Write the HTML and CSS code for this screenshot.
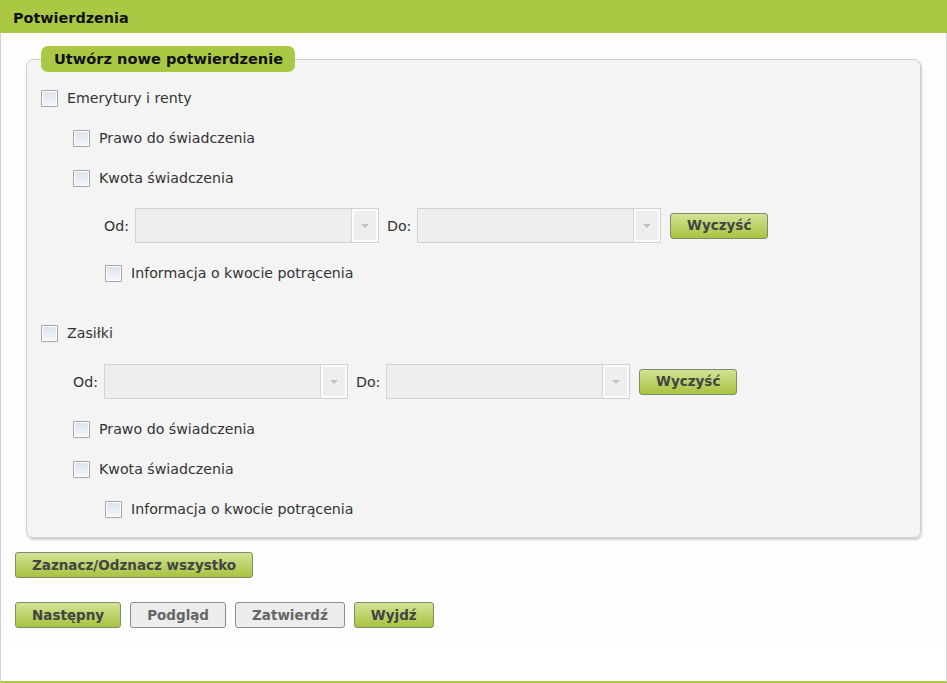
FILE: index.html
```html
<!DOCTYPE HTML>
<html>
<head>
	<meta charset="utf-8" />
	<title>Potwierdzenia</title>
	<link rel="stylesheet" href="styles.css">
</head>
<body>
	<div class="panel">
		<div class="panel-head">Potwierdzenia</div>
		<div class="panel-body">
			<fieldset class="box">
				<legend>Utwórz nowe potwierdzenie</legend>

				<label class="row first"><input type="checkbox" /> Emerytury i renty</label>
				<label class="row lvl1"><input type="checkbox" /> Prawo do świadczenia</label>
				<label class="row lvl1"><input type="checkbox" /> Kwota świadczenia</label>
				<div class="range lvl2">
					<span class="range-label">Od:</span>
					<div class="select"><div class="select-value"></div><div class="select-arrow"></div></div>
					<span class="range-label to">Do:</span>
					<div class="select"><div class="select-value"></div><div class="select-arrow"></div></div>
					<button class="btn small">Wyczyść</button>
				</div>
				<label class="row lvl2 after-range"><input type="checkbox" /> Informacja o kwocie potrącenia</label>

				<label class="row group"><input type="checkbox" /> Zasiłki</label>
				<div class="range lvl1 tight">
					<span class="range-label">Od:</span>
					<div class="select"><div class="select-value"></div><div class="select-arrow"></div></div>
					<span class="range-label to">Do:</span>
					<div class="select"><div class="select-value"></div><div class="select-arrow"></div></div>
					<button class="btn small">Wyczyść</button>
				</div>
				<label class="row lvl1 after-range"><input type="checkbox" /> Prawo do świadczenia</label>
				<label class="row lvl1"><input type="checkbox" /> Kwota świadczenia</label>
				<label class="row lvl2"><input type="checkbox" /> Informacja o kwocie potrącenia</label>
			</fieldset>

			<div class="actions">
				<button class="btn">Zaznacz/Odznacz wszystko</button>
			</div>
			<div class="actions nav">
				<button class="btn">Następny</button>
				<button class="btn off">Podgląd</button>
				<button class="btn off">Zatwierdź</button>
				<button class="btn">Wyjdź</button>
			</div>
		</div>
		<div class="panel-foot"></div>
	</div>
</body>
</html>
```

FILE: styles.css
```css
body {
	font-family: 'DejaVu Sans', Verdana, sans-serif;
	font-size: 14.2px;
	color: #333;
	margin: 0;
	padding: 0;
	background: #fff;
}

.panel {
	border-left: 1px solid #d4d4d4;
	border-right: 1px solid #d4d4d4;
	border-bottom: 2px solid #a9c744;
	height: 681px;
	display: flex;
	flex-direction: column;
}

.panel-head {
	background: #abc845;
	color: #111;
	font-weight: bold;
	font-size: 14.4px;
	height: 33px;
	line-height: 36px;
	padding-left: 13px;
	margin-left: -1px;
	margin-right: -1px;
}

.panel-body {
	background: #fdfdfd;
	padding: 13px 14px 13px 14px;
}

.panel-foot {
	flex: 1;
	background: #fff;
}

.box {
	background: #f4f4f4;
	border: 1px solid #cfcfcf;
	border-radius: 7px;
	box-shadow: 1px 2px 2px rgba(0, 0, 0, .18);
	margin: 0 11px;
	padding: 0 14px 8px 14px;
}

.box legend {
	background: #abc845;
	border-radius: 7px;
	color: #111;
	font-weight: bold;
	font-size: 14.6px;
	line-height: 26px;
	height: 26px;
	padding: 0 12px 0 13px;
}

.row {
	display: flex;
	align-items: center;
	height: 40px;
	white-space: nowrap;
}

.row input {
	-webkit-appearance: none;
	appearance: none;
	width: 17px;
	height: 17px;
	margin: 0 9px 0 0;
	border: 1px solid #a4a4a4;
	border-radius: 1px;
	box-shadow: inset 0 0 0 1px #fff;
	background: linear-gradient(#dae2ec, #f5f7fa);
	box-sizing: border-box;
	flex: none;
}

.first { margin-top: 6px; }
.group { margin-top: 20px; }
.after-range { margin-top: 10px; }

.lvl1 { padding-left: 32px; }
.lvl2 { padding-left: 64px; }

.range {
	display: flex;
	align-items: center;
	height: 35px;
	margin-top: 10px;
}
.range.lvl2 { padding-left: 63px; }
.range.tight { margin-top: 11px; }

.range-label {
	width: 31px;
	flex: none;
}
.range-label.to {
	margin-left: 8px;
	width: 30px;
}

.select {
	display: flex;
	width: 244px;
	height: 35px;
	box-sizing: border-box;
	border: 1px solid #d2d2d2;
	background: #eee;
	flex: none;
}
.select-value {
	flex: 1;
}
.select-arrow {
	width: 26px;
	border-left: 1px solid #d8d8d8;
	box-shadow: inset 0 0 0 2px #fbfbfb;
	position: relative;
}
.select-arrow:after {
	content: '';
	position: absolute;
	left: 9px;
	top: 15px;
	border-left: 4px solid transparent;
	border-right: 4px solid transparent;
	border-top: 4px solid #c2c2c2;
}

.btn {
	font-family: 'DejaVu Sans', Verdana, sans-serif;
	font-weight: bold;
	font-size: 13.5px;
	color: #444;
	height: 26px;
	line-height: 23px;
	padding: 0 16px;
	border: 1px solid #7f8b6a;
	border-radius: 3px;
	background: linear-gradient(#d2e396, #a7c33f);
	cursor: pointer;
	white-space: nowrap;
}
.btn.off {
	background: #ececec;
	border-color: #8c8c8c;
	color: #666;
}
.btn.small {
	margin-left: 9px;
	padding: 0 16px;
}

.actions {
	display: flex;
	gap: 9px;
	margin-top: 14px;
}
.actions.nav {
	margin-top: 24px;
}
```
